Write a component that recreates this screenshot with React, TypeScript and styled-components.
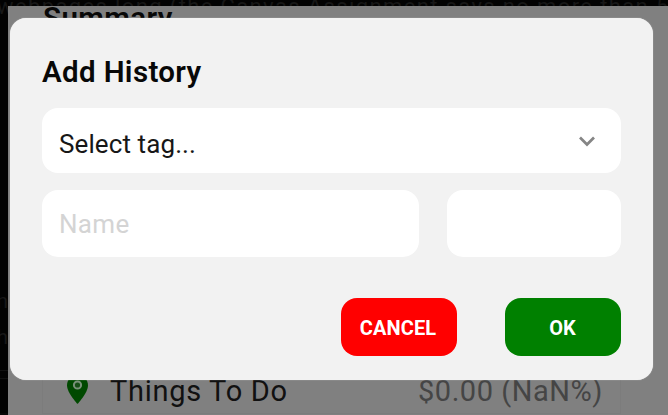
import React from "react";
import styled, { createGlobalStyle } from "styled-components";

const GlobalStyle = createGlobalStyle`
  *, *::before, *::after { box-sizing: border-box; }
  body { margin: 0; background: #020202; overflow: hidden; }
  button, input { font: inherit; border: 0; margin: 0; outline: 0; }
`;

const Page = styled.div`
  width: 668px;
  height: 415px;
  display: grid;
  grid-template: 6px 409px / 8px 660px;
  overflow: hidden;
  background: #020202;
  color: #171717;
  font-family: Roboto, sans-serif;
`;

const DocumentLine = styled.div`
  grid-column: 1 / -1;
  white-space: nowrap;
  font-size: 22px;
  line-height: 24px;
  letter-spacing: 1.37px;
  text-indent: -3px;

  span { display: block; margin-top: -5px; }
`;

const DocumentMargin = styled.div`
  overflow: hidden;
  padding-top: 277px;
  font-size: 21px;
  line-height: 36px;
  direction: rtl;
  border-bottom: 2px solid #080808;

  span { display: block; }
`;

const MarginRule = styled.div`
  height: 9px;
  margin-top: 15px;
  border: solid #101010;
  border-width: 1px 0;
`;

const Screen = styled.div`
  position: relative;
  display: flex;
  flex-direction: column;
  justify-content: space-between;
  overflow: hidden;
  padding: 0 47px 0 34px;
  background: #808080;
`;

const Summary = styled.div`
  margin-top: -5px;
  padding-left: 1px;
  color: #080808;
  font-size: 29.5px;
  font-weight: 600;
  line-height: 34px;
  letter-spacing: 0.4px;
`;

const ListRow = styled.div`
  display: flex;
  align-items: center;
  height: 52px;
  margin-bottom: 1px;
  padding: 6px 18px 0 24px;
  border: 1px solid #7c7c7c;
  font-size: 29px;
  line-height: 34px;
`;

const Pin = styled.svg`
  width: 21px;
  height: 29px;
  margin-top: -3px;
  flex: none;
`;

const RowName = styled.span`
  margin-left: 22px;
  color: #111;
  letter-spacing: 0.7px;
`;

const RowAmount = styled.span`
  margin-left: auto;
  margin-right: -1px;
  color: #454545;
  letter-spacing: 0.55px;
`;

const Dialog = styled.form`
  position: absolute;
  left: 1.5px;
  top: 11.5px;
  width: 643.5px;
  height: 362.5px;
  padding: 37px 32px 0 32.5px;
  border-radius: 16px;
  background: #f2f2f2;
  box-shadow: 0 0 1px #ddd;
`;

const Title = styled.h1`
  margin: 0 0 18.5px;
  color: #080808;
  font-size: 29.5px;
  line-height: 35px;
  font-weight: 600;
  letter-spacing: 0.35px;
`;

const SelectField = styled.button`
  display: flex;
  align-items: center;
  justify-content: space-between;
  width: 100%;
  height: 65px;
  padding: 6px 25px 0 17px;
  border-radius: 16px;
  background: #fff;
  color: #171717;
  font-size: 26px;
  letter-spacing: 0.1px;
`;

const Chevron = styled.svg`
  width: 18px;
  height: 12px;
  margin-top: -6px;
`;

const Fields = styled.div`
  display: grid;
  grid-template-columns: 377px 174.5px;
  justify-content: space-between;
  margin-top: 17px;
`;

const TextField = styled.input`
  min-width: 0;
  height: 67px;
  padding: 0 17px;
  border-radius: 16px;
  background: #fff;
  color: #171717;
  font-size: 26px;
  letter-spacing: 0.3px;

  &::placeholder { color: #d4d4d4; opacity: 1; }
`;

const Actions = styled.div`
  display: flex;
  justify-content: flex-end;
  gap: 48.5px;
  margin-top: 41px;
`;

const ActionButton = styled.button<{ $color: string }>`
  width: 116px;
  height: 57.5px;
  padding: 2px 1px 0 0;
  border-radius: 16px;
  background: ${({ $color }) => $color};
  color: #fff;
  font-size: 20px;
  font-weight: 700;
  letter-spacing: 0.1px;
`;

const Faint = styled.span`
  color: #171717;
`;

export default function App() {
  return (
    <>
      <GlobalStyle />
      <Page>
        <DocumentLine>
          <Faint>webpages long (the Canvas Assignment says no more than 5</Faint>
        </DocumentLine>
        <DocumentMargin>
          <Faint>n</Faint>
          <Faint>h</Faint>
          <MarginRule />
        </DocumentMargin>
        <Screen>
          <Summary>Summary</Summary>
          <ListRow>
            <Pin viewBox="0 0 21 29" aria-hidden="true">
              <path d="M10.5 0C4.7 0 0 4.6 0 10.3C0 18 10.5 29 10.5 29S21 18 21 10.3C21 4.6 16.3 0 10.5 0Z" fill="#004900" />
              <circle cx="10.5" cy="10" r="3.6" fill="#164f16" stroke="#789078" strokeWidth="2" />
            </Pin>
            <RowName>Things To Do</RowName>
            <RowAmount>$0.00 (NaN%)</RowAmount>
          </ListRow>
          <Dialog onSubmit={(event) => event.preventDefault()}>
            <Title>Add History</Title>
            <SelectField type="button">
              Select tag...
              <Chevron viewBox="0 0 18 12" fill="none" aria-hidden="true">
                <path d="M2 2.5L9 9.5L16 2.5" stroke="#858585" strokeWidth="2.7" />
              </Chevron>
            </SelectField>
            <Fields>
              <TextField placeholder="Name" aria-label="Name" />
              <TextField aria-label="Amount" />
            </Fields>
            <Actions>
              <ActionButton type="button" $color="#ff0000">CANCEL</ActionButton>
              <ActionButton type="submit" $color="#008000">OK</ActionButton>
            </Actions>
          </Dialog>
        </Screen>
      </Page>
    </>
  );
}
